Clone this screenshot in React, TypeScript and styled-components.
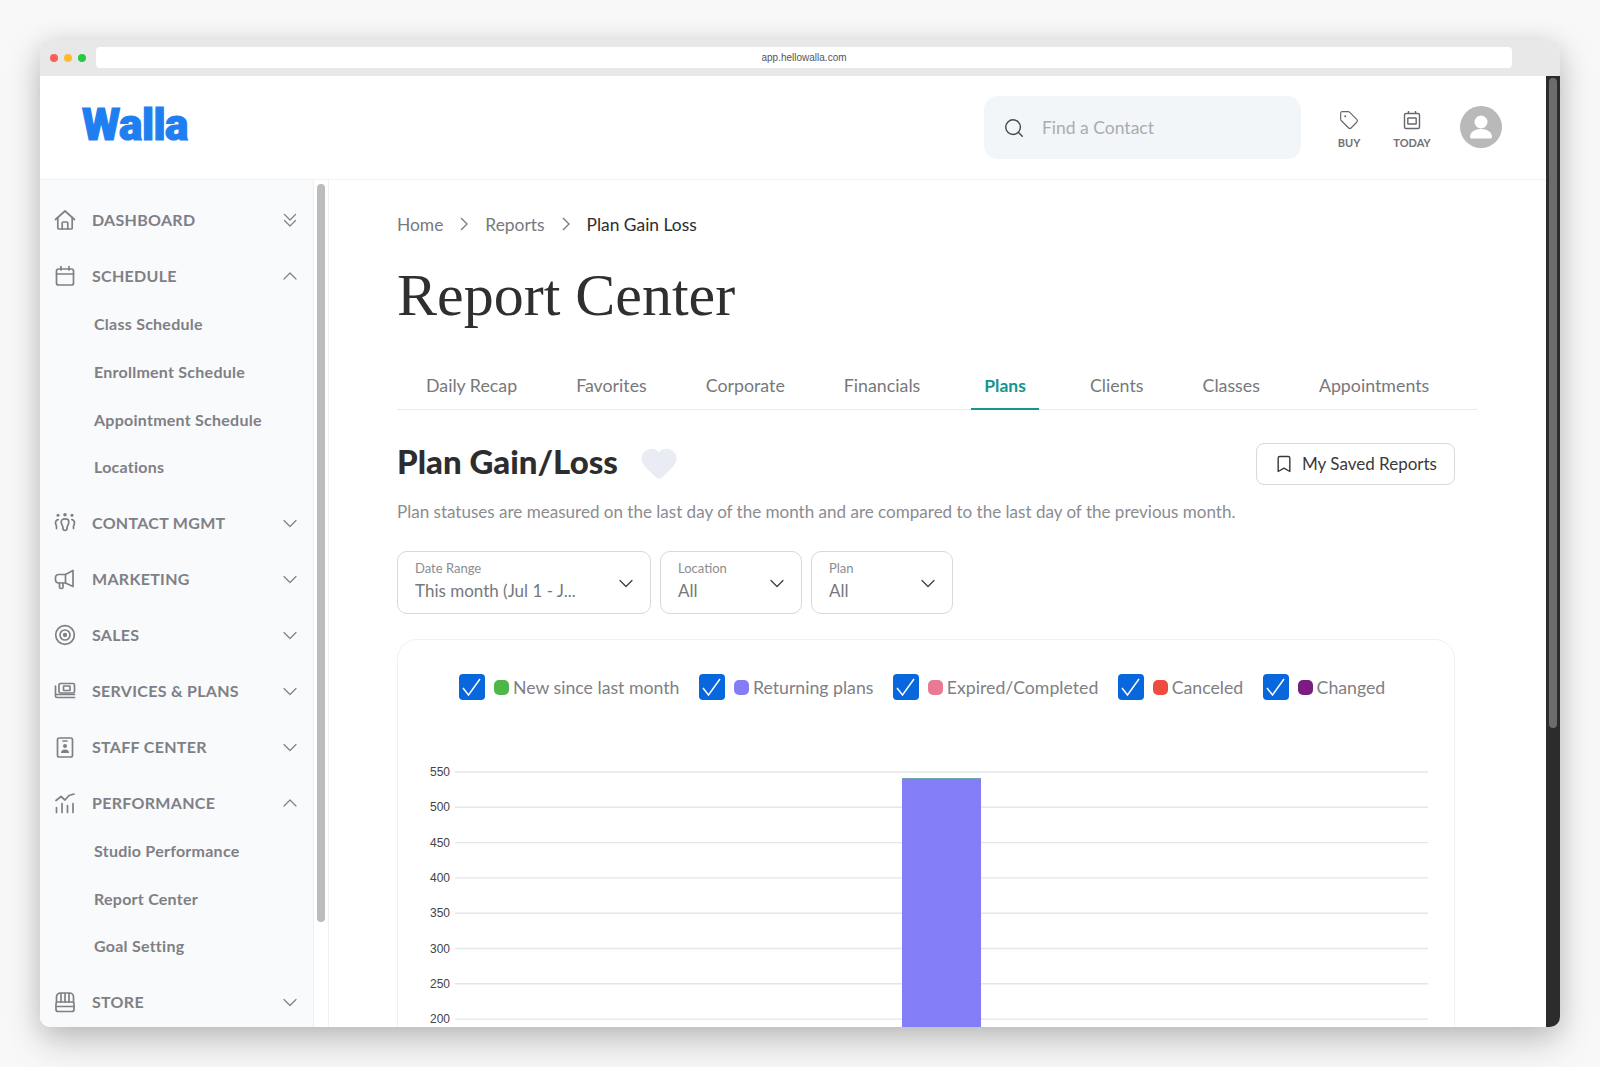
import React from "react";
import styled, { createGlobalStyle } from "styled-components";
import { Bookmark, Heart, Search, Tag } from "lucide-react";

const GlobalStyle = createGlobalStyle`
  html, body {
    margin: 0;
    padding: 0;
    background: #f8f8f8;
    font-family: "Lato", "Noto Sans", sans-serif;
  }
  * { box-sizing: border-box; }
`;

const Page = styled.div`
  width: 1600px;
  height: 1067px;
  padding: 40px;
  overflow: hidden;
`;
const BrowserWindow = styled.div`
  width: 1520px;
  height: 987px;
  display: flex;
  flex-direction: column;
  border-radius: 10px;
  overflow: hidden;
  background: #fff;
  box-shadow: 0 14px 34px rgba(0, 0, 0, 0.22), 0 0 24px rgba(0, 0, 0, 0.08);
`;
const TitleBar = styled.div`
  height: 36px;
  flex: none;
  display: flex;
  align-items: center;
  gap: 6px;
  padding: 0 48px 1px 10px;
  background: #e8e8e8;
`;
const Light = styled.span<{ color: string }>`
  width: 8px;
  height: 8px;
  border-radius: 50%;
  background: ${(props) => props.color};
`;
const UrlBar = styled.div`
  flex: 1;
  height: 21px;
  margin-left: 4px;
  background: #fff;
  border-radius: 4px;
  text-align: center;
  font-family: "Liberation Sans", sans-serif;
  font-size: 10px;
  line-height: 21px;
  color: #555;
`;
const WindowBody = styled.div`
  flex: 1;
  min-height: 0;
  display: flex;
`;
const AppArea = styled.div`
  flex: 1;
  min-width: 0;
  display: flex;
  flex-direction: column;
`;
const PageScrollTrack = styled.div`
  width: 14px;
  flex: none;
  padding: 2px 3px;
  background: #2c2c2c;
`;
const PageScrollThumb = styled.div`
  height: 650px;
  border-radius: 5px;
  background: #6c6c6c;
`;
const Header = styled.header`
  height: 104px;
  flex: none;
  display: flex;
  align-items: center;
  padding: 0 44px 2px 42px;
  border-bottom: 1px solid #f0f1f2;
`;
const Logo = styled.div`
  margin-top: -4px;
  font-family: "Roboto", sans-serif;
  font-weight: 900;
  font-size: 44px;
  line-height: 46px;
  letter-spacing: -0.5px;
  color: #1f7ff0;
  -webkit-text-stroke: 1.2px #1f7ff0;
`;
const SearchBox = styled.div`
  width: 317px;
  height: 63px;
  margin: 2px 0 0 auto;
  display: flex;
  align-items: center;
  gap: 17px;
  padding-left: 19px;
  border-radius: 14px;
  background: #f3f6f9;
  font-size: 17.5px;
  color: #a9acb1;
  svg {
    color: #4a4a4a;
  }
`;
const HeaderAction = styled.div<{ width: number }>`
  width: ${(props) => props.width}px;
  display: flex;
  flex-direction: column;
  align-items: center;
  gap: 6px;
  padding-top: 6px;
  font-size: 11px;
  font-weight: 700;
  line-height: 14px;
  color: #707176;
  svg {
    color: #66676b;
  }
`;
const BuyAction = styled(HeaderAction)`
  margin-left: 29px;
`;
const TodayAction = styled(HeaderAction)`
  margin-left: 22px;
`;
const Avatar = styled.div`
  width: 42px;
  height: 42px;
  margin-left: 26px;
  border-radius: 50%;
  overflow: hidden;
  background: #b9b9b9;
`;
const Columns = styled.div`
  flex: 1;
  min-height: 0;
  display: flex;
`;
const Sidebar = styled.aside`
  width: 289px;
  flex: none;
  display: flex;
  background: #f9fafc;
  border-right: 1px solid #f0f1f2;
  overflow: hidden;
`;
const Nav = styled.nav`
  width: 274px;
  flex: none;
  padding-top: 12px;
  border-right: 1px solid #eeeff1;
`;
const SideScroll = styled.div`
  flex: 1;
  padding: 4px 3px;
  background: #fff;
`;
const SideThumb = styled.div`
  width: 8px;
  height: 738px;
  border-radius: 4px;
  background: #bcbcbc;
`;
const NavRow = styled.div`
  height: 56px;
  display: flex;
  align-items: center;
  gap: 16px;
  padding: 0 15px 0 14px;
  color: #7f8085;
`;
const NavIcon = styled.span`
  width: 22px;
  height: 22px;
  flex: none;
  svg {
    display: block;
  }
`;
const NavLabel = styled.span`
  flex: 1;
  margin-top: -1px;
  font-size: 16px;
  font-weight: 700;
  letter-spacing: 0.3px;
`;
const SubList = styled.div`
  margin: -4px 0 4px;
`;
const SubItem = styled.div`
  height: 47.7px;
  display: flex;
  align-items: center;
  padding-left: 54px;
  font-size: 16px;
  font-weight: 700;
  letter-spacing: 0.25px;
  color: #7f8085;
`;
const Main = styled.main`
  flex: 1;
  min-width: 0;
  padding: 32px 69px 0 68px;
  overflow: hidden;
`;
const Breadcrumbs = styled.div`
  height: 24px;
  display: flex;
  align-items: center;
  gap: 15px;
  font-size: 17.4px;
  color: #77787c;
  svg {
    color: #77787c;
  }
`;
const Crumb = styled.span<{ current?: boolean }>`
  color: ${(props) => (props.current ? "#2d2d2d" : "#77787c")};
`;
const PageTitle = styled.h1`
  margin: 24px 0 0;
  height: 70px;
  font-family: "Liberation Serif", serif;
  font-weight: 400;
  font-size: 60px;
  line-height: 70px;
  color: #2f2f2f;
`;
const Tabs = styled.div`
  margin-top: 32px;
  height: 48px;
  display: flex;
  gap: 33px;
  padding-left: 16px;
  border-bottom: 1px solid #e9eaec;
`;
const Tab = styled.div<{ active?: boolean }>`
  height: 48px;
  margin: 0 ${(props) => (props.active ? 5 : 0)}px;
  padding: 0 13px;
  display: flex;
  align-items: center;
  font-size: ${(props) => (props.active ? 17.5 : 17.8)}px;
  color: ${(props) => (props.active ? "#15958f" : "#77787c")};
  font-weight: ${(props) => (props.active ? 700 : 400)};
  border-bottom: 2px solid ${(props) => (props.active ? "#15958f" : "transparent")};
`;
const ReportHeading = styled.div`
  margin: 33px 22px 0 0;
  height: 42px;
  display: flex;
  align-items: center;
`;
const ReportTitle = styled.h2`
  margin: 0 0 6px;
  font-size: 33px;
  font-weight: 900;
  color: #2d2d2d;
`;
const FavButton = styled.span`
  margin: 0 0 2px 21px;
  display: flex;
  color: #e9edf3;
`;
const SavedButton = styled.button`
  width: 199px;
  height: 42px;
  margin-left: auto;
  padding: 0 0 1px;
  display: flex;
  align-items: center;
  justify-content: center;
  gap: 8px;
  border: 1px solid #d5d8dc;
  border-radius: 8px;
  background: #fff;
  font-family: inherit;
  font-size: 17px;
  color: #3a3a3a;
`;
const Description = styled.p`
  margin: 15px 0 0;
  font-size: 17.05px;
  line-height: 24px;
  color: #8b8c91;
`;
const Filters = styled.div`
  margin-top: 27px;
  display: flex;
  gap: 9px;
`;
const Select = styled.div<{ width: number }>`
  width: ${(props) => props.width}px;
  height: 63px;
  display: flex;
  align-items: center;
  justify-content: space-between;
  padding: 0 16px 0 17px;
  border: 1px solid #d5d8dc;
  border-radius: 10px;
  color: #3a3a3a;
`;
const SelectText = styled.div`
  margin-top: -3px;
  display: flex;
  flex-direction: column;
`;
const SelectLabel = styled.span`
  font-size: 13px;
  line-height: 16px;
  margin-bottom: 3px;
  color: #8b8c91;
`;
const SelectValue = styled.span`
  font-size: 17px;
  line-height: 24px;
  color: #77787c;
`;
const ChartCard = styled.section`
  margin: 25px 22px 0 0;
  height: 480px;
  border: 1px solid #eef0f2;
  border-radius: 20px;
`;
const Legend = styled.div`
  display: flex;
  gap: 19.4px;
  padding: 34px 0 0 61px;
`;
const LegendItem = styled.div`
  display: flex;
  align-items: center;
  font-size: 17.7px;
  color: #7f8085;
`;
const CheckBox = styled.span`
  width: 26px;
  height: 26px;
  margin-right: 9px;
  border-radius: 4px;
  background: #0867dc;
  svg {
    display: block;
  }
`;
const Swatch = styled.span<{ color: string }>`
  width: 15px;
  height: 15px;
  margin-right: 4px;
  border-radius: 5px;
  background: ${(props) => props.color};
`;
const ChartSvg = styled.svg`
  display: block;
  margin-top: 62px;
`;

const stroke = {
  fill: "none",
  stroke: "currentColor",
  strokeWidth: 1.7,
  strokeLinecap: "round" as const,
  strokeLinejoin: "round" as const,
};

const Glyph = ({ children }: { children: React.ReactNode }) => (
  <NavIcon>
    <svg width="22" height="22" viewBox="0 0 22 22" {...stroke}>
      {children}
    </svg>
  </NavIcon>
);

const Chevron = ({ kind }: { kind: "up" | "down" | "double" }) => (
  <svg width="16" height="16" viewBox="0 0 16 16" fill="none" stroke="currentColor" strokeWidth="1.2" strokeLinecap="round" strokeLinejoin="round">
    {kind === "up" && <path d="M2 11l6-6 6 6" />}
    {kind === "down" && <path d="M2 5.5l6 6 6-6" />}
    {kind === "double" && (
      <>
        <path d="M2.5 2.5L8 8l5.5-5.5" />
        <path d="M2.5 8.5L8 14l5.5-5.5" />
      </>
    )}
  </svg>
);

const icons: Record<string, React.ReactNode> = {
  home: (
    <>
      <path d="M1.5 10.5L11 2l9.5 8.5" />
      <path d="M3.8 8.5V19a1 1 0 0 0 1 1h12.4a1 1 0 0 0 1-1V8.5" />
      <path d="M8.2 20v-6a1 1 0 0 1 1-1h3.6a1 1 0 0 1 1 1v6" />
    </>
  ),
  calendar: (
    <>
      <rect x="2.5" y="4" width="17" height="16" rx="2" />
      <path d="M2.5 9h17M7 1.5V5M15 1.5V5" />
    </>
  ),
  contacts: (
    <>
      <circle cx="11" cy="2.8" r="1.8" fill="currentColor" stroke="none" />
      <circle cx="4" cy="3.2" r="1.5" fill="currentColor" stroke="none" />
      <circle cx="18" cy="3.2" r="1.5" fill="currentColor" stroke="none" />
      <path d="M7.2 9.500c0-1.600 1.600-2.600 3.800-2.600s3.800 1 3.800 2.600c0 3-1.200 4-1.600 5.200 0 2-.6 3.800-2.200 3.800s-2.200-1.800-2.200-3.800C8.400 13.500 7.200 12.500 7.200 9.500z" />
      <path d="M4.200 7.500C2.500 8 1.500 9.200 1.500 10.800c0 1.500.6 2.200 1 3.200v2.500M17.800 7.500c1.700.5 2.700 1.700 2.700 3.300 0 1.500-.6 2.200-1 3.200v2.500" />
    </>
  ),
  marketing: (
    <>
      <path d="M19 2.500v16L11.500 15H4.500a3 3 0 0 1-3-3V9.500a3 3 0 0 1 3-3h7z" />
      <path d="M5.500 15v4a1.500 1.500 0 0 0 1.500 1.500h.5A1.500 1.500 0 0 0 9 19v-4M11.500 6.500V15" />
    </>
  ),
  sales: (
    <>
      <circle cx="11" cy="11" r="9.300" />
      <circle cx="11" cy="11" r="5" />
      <circle cx="11" cy="11" r="1.300" fill="currentColor" />
    </>
  ),
  services: (
    <>
      <rect x="5" y="3.500" width="15.500" height="9.500" rx="1.500" />
      <rect x="9.500" y="6" width="6.500" height="4.500" rx="0.500" />
      <path d="M1.500 6v10a1.500 1.500 0 0 0 1.500 1.500h17.500M1.500 14.500H20.500" />
    </>
  ),
  staff: (
    <>
      <rect x="3.500" y="2" width="15" height="19" rx="1.800" />
      <path d="M9 5h4" />
      <circle cx="11" cy="10" r="2" fill="currentColor" stroke="none" />
      <path d="M7 17c0-2.500 1.700-3.500 4-3.500s4 1 4 3.500z" fill="currentColor" stroke="none" />
    </>
  ),
  performance: (
    <>
      <path d="M2 8.500l5-4 4 3.500 4-4.500 5-1.500" />
      <path d="M2.500 20.500v-5M8 20.500v-9M13.500 20.500v-7M19 20.500v-9" />
    </>
  ),
  store: (
    <>
      <rect x="2" y="11" width="18" height="9.500" rx="2" />
      <path d="M2 15.500h18" />
      <path d="M2.500 11V6a4 4 0 0 1 4-4h9a4 4 0 0 1 4 4v5M7 2.500V11M11 2.500V11M15 2.500V11" />
    </>
  ),
};

const NavSection = ({
  icon,
  label,
  open,
  chevron,
  items,
}: {
  icon: string;
  label: string;
  open?: boolean;
  chevron?: "double";
  items?: string[];
}) => (
  <>
    <NavRow>
      <Glyph>{icons[icon]}</Glyph>
      <NavLabel>{label}</NavLabel>
      <Chevron kind={chevron ? chevron : open ? "up" : "down"} />
    </NavRow>
    {items && (
      <SubList>
        {items.map((item) => (
          <SubItem key={item}>{item}</SubItem>
        ))}
      </SubList>
    )}
  </>
);

const tabs = ["Daily Recap", "Favorites", "Corporate", "Financials", "Plans", "Clients", "Classes", "Appointments"];

const legend = [
  { label: "New since last month", color: "#4db848" },
  { label: "Returning plans", color: "#837ef8" },
  { label: "Expired/Completed", color: "#ea7a94" },
  { label: "Canceled", color: "#ee4c40" },
  { label: "Changed", color: "#7a1c82" },
];

const ticks = [550, 500, 450, 400, 350, 300, 250, 200];

const Chart = () => (
  <ChartSvg width="1056" height="330" viewBox="0 0 1056 330">
    {ticks.map((tick, i) => {
      const y = 10 + i * 35.3;
      return (
        <g key={tick}>
          <line x1="57" x2="1030" y1={y} y2={y} stroke="#e6e6e6" strokeWidth="1.4" />
          <text x="52" y={y + 4} textAnchor="end" fontFamily="Liberation Sans" fontSize="12" fill="#444">
            {tick}
          </text>
        </g>
      );
    })}
    <rect x="504" y="16" width="79" height="320" fill="#837ef8" />
    <rect x="504" y="16" width="79" height="1" fill="#6fa3ab" />
  </ChartSvg>
);

const App = () => (
  <Page>
    <GlobalStyle />
    <BrowserWindow>
      <TitleBar>
        <Light color="#fc5f57" />
        <Light color="#febb2e" />
        <Light color="#28c840" />
        <UrlBar>app.hellowalla.com</UrlBar>
      </TitleBar>
      <WindowBody>
        <AppArea>
          <Header>
            <Logo>Walla</Logo>
            <SearchBox>
              <Search size={22} strokeWidth={1.6} />
              Find a Contact
            </SearchBox>
            <BuyAction width={38}>
              <Tag size={20} strokeWidth={1.4} />
              BUY
            </BuyAction>
            <TodayAction width={44}>
              <svg width="20" height="20" viewBox="0 0 20 20" fill="none" stroke="currentColor" strokeWidth="1.4">
                <rect x="2.500" y="3.500" width="15" height="15" rx="1.500" />
                <rect x="5.800" y="8" width="8.400" height="6" rx="0.600" />
                <path d="M6.500 1v2.500M13.500 1v2.500" />
              </svg>
              TODAY
            </TodayAction>
            <Avatar>
              <svg width="42" height="42" viewBox="0 0 42 42" fill="#fff">
                <circle cx="21" cy="16" r="6.500" />
                <path d="M10 31c0-5 5-8 11-8s11 3 11 8c0 1-1 1.500-2 1.500H12c-1 0-2-.5-2-1.500z" />
              </svg>
            </Avatar>
          </Header>
          <Columns>
            <Sidebar>
              <Nav>
                <NavSection icon="home" label="DASHBOARD" chevron="double" />
                <NavSection
                  icon="calendar"
                  label="SCHEDULE"
                  open
                  items={["Class Schedule", "Enrollment Schedule", "Appointment Schedule", "Locations"]}
                />
                <NavSection icon="contacts" label="CONTACT MGMT" />
                <NavSection icon="marketing" label="MARKETING" />
                <NavSection icon="sales" label="SALES" />
                <NavSection icon="services" label="SERVICES & PLANS" />
                <NavSection icon="staff" label="STAFF CENTER" />
                <NavSection
                  icon="performance"
                  label="PERFORMANCE"
                  open
                  items={["Studio Performance", "Report Center", "Goal Setting"]}
                />
                <NavSection icon="store" label="STORE" />
              </Nav>
              <SideScroll>
                <SideThumb />
              </SideScroll>
            </Sidebar>
            <Main>
              <Breadcrumbs>
                <Crumb>Home</Crumb>
                <svg width="12" height="14" viewBox="0 0 12 14" fill="none" stroke="currentColor" strokeWidth="1.300">
                  <path d="M3 1l6 6-6 6" />
                </svg>
                <Crumb>Reports</Crumb>
                <svg width="12" height="14" viewBox="0 0 12 14" fill="none" stroke="currentColor" strokeWidth="1.300">
                  <path d="M3 1l6 6-6 6" />
                </svg>
                <Crumb current>Plan Gain Loss</Crumb>
              </Breadcrumbs>
              <PageTitle>Report Center</PageTitle>
              <Tabs>
                {tabs.map((tab) => (
                  <Tab key={tab} active={tab === "Plans"}>
                    {tab}
                  </Tab>
                ))}
              </Tabs>
              <ReportHeading>
                <ReportTitle>Plan Gain/Loss</ReportTitle>
                <FavButton>
                  <Heart size={40} fill="currentColor" strokeWidth={1} />
                </FavButton>
                <SavedButton>
                  <Bookmark size={20} strokeWidth={1.7} />
                  My Saved Reports
                </SavedButton>
              </ReportHeading>
              <Description>
                Plan statuses are measured on the last day of the month and are compared to the last day of the previous month.
              </Description>
              <Filters>
                <Select width={254}>
                  <SelectText>
                    <SelectLabel>Date Range</SelectLabel>
                    <SelectValue>This month (Jul 1 - J...</SelectValue>
                  </SelectText>
                  <Chevron kind="down" />
                </Select>
                <Select width={142}>
                  <SelectText>
                    <SelectLabel>Location</SelectLabel>
                    <SelectValue>All</SelectValue>
                  </SelectText>
                  <Chevron kind="down" />
                </Select>
                <Select width={142}>
                  <SelectText>
                    <SelectLabel>Plan</SelectLabel>
                    <SelectValue>All</SelectValue>
                  </SelectText>
                  <Chevron kind="down" />
                </Select>
              </Filters>
              <ChartCard>
                <Legend>
                  {legend.map((entry) => (
                    <LegendItem key={entry.label}>
                      <CheckBox>
                        <svg width="26" height="26" viewBox="0 0 26 26" fill="none" stroke="#fff" strokeWidth="1.500">
                          <path d="M4 14l5.500 7L21 5" />
                        </svg>
                      </CheckBox>
                      <Swatch color={entry.color} />
                      {entry.label}
                    </LegendItem>
                  ))}
                </Legend>
                <Chart />
              </ChartCard>
            </Main>
          </Columns>
        </AppArea>
        <PageScrollTrack>
          <PageScrollThumb />
        </PageScrollTrack>
      </WindowBody>
    </BrowserWindow>
  </Page>
);

export default App;
